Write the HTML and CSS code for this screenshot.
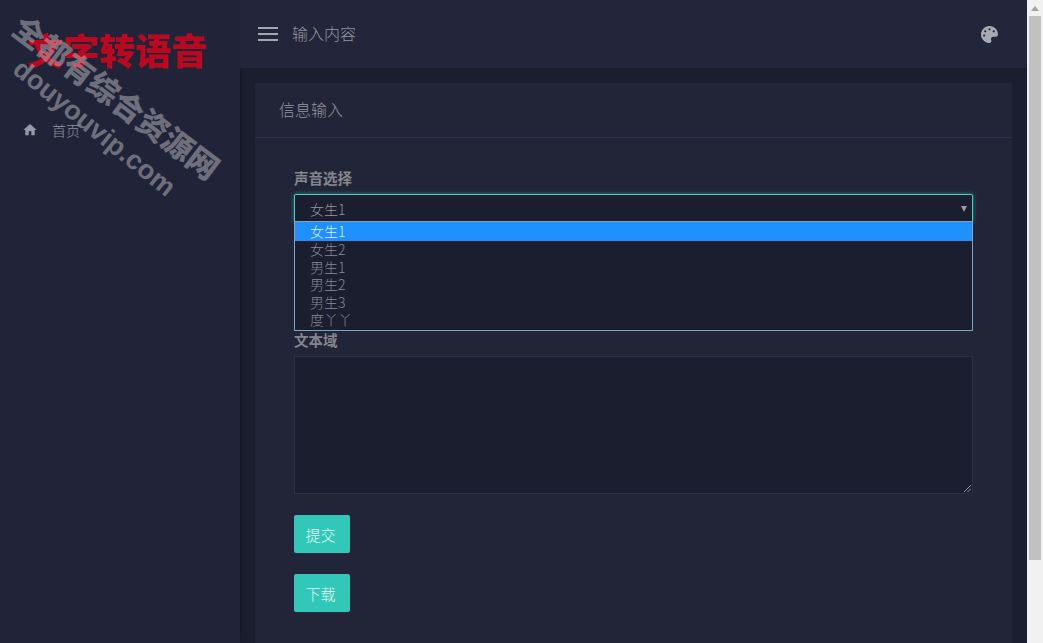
FILE: index.html
```html
<!DOCTYPE html>
<html lang="zh-CN">
<head>
    <meta charset="UTF-8">
    <title>文字转语音</title>
    <link rel="stylesheet" href="styles.css">
</head>
<body>

<div class="app">

    <!-- Sidebar -->
    <aside class="sidebar">
        <div class="logo">文字转语音</div>
        <a class="nav-item">
            <svg class="nav-icon" viewBox="0 0 24 24"><path d="M10 20v-6h4v6h5v-8h3L12 3 2 12h3v8z"/></svg>
            <span>首页</span>
        </a>
    </aside>

    <div class="main">

        <!-- Header -->
        <header class="topbar">
            <div class="burger"><i></i><i></i><i></i></div>
            <div class="topbar-title">输入内容</div>
            <svg class="palette" viewBox="0 0 512 512"><path d="M204.3 5C104.9 24.4 24.8 104.3 5.2 203.4c-37 187 131.7 326.4 258.8 306.7 41.2-6.4 61.4-54.6 42.5-91.7-23.1-45.4 9.9-98.4 60.9-98.4h79.7c35.8 0 64.8-29.6 64.9-65.3C511.5 97.1 368.1-26.9 204.3 5zM96 320c-17.7 0-32-14.3-32-32s14.3-32 32-32 32 14.3 32 32-14.3 32-32 32zm32-128c-17.7 0-32-14.3-32-32s14.3-32 32-32 32 14.3 32 32-14.3 32-32 32zm128-64c-17.7 0-32-14.3-32-32s14.3-32 32-32 32 14.3 32 32-14.3 32-32 32zm128 64c-17.7 0-32-14.3-32-32s14.3-32 32-32 32 14.3 32 32-14.3 32-32 32z"/></svg>
        </header>

        <!-- Card -->
        <div class="content">
            <div class="card">
                <div class="card-head">信息输入</div>
                <div class="card-body">
                    <div class="field-label">声音选择</div>
                    <div class="select-wrap">
                        <div class="select">
                            <span>女生1</span>
                            <span class="caret"></span>
                        </div>
                        <ul class="options">
                            <li class="active">女生1</li>
                            <li>女生2</li>
                            <li>男生1</li>
                            <li>男生2</li>
                            <li>男生3</li>
                            <li>度丫丫</li>
                        </ul>
                    </div>
                    <div class="field-label area-label">文本域</div>
                    <div class="textarea">
                        <svg class="grip" viewBox="0 0 8 8"><path d="M0 8L8 0M4 8L8 4"/></svg>
                    </div>
                    <button class="btn">提交</button>
                    <button class="btn">下载</button>
                </div>
            </div>
        </div>
    </div>

    <!-- Scrollbar -->
    <div class="scrollbar">
        <div class="arrow"></div>
        <div class="thumb"></div>
    </div>
</div>

<!-- Watermark -->
<div class="watermark">
    <div class="wm-cn">全都有综合资源网</div>
    <div class="wm-en">douyouvip.com</div>
</div>

</body>
</html>
```

FILE: styles.css
```css
* {
    box-sizing: border-box;
}
html, body {
    margin: 0;
    height: 100%;
    overflow: hidden;
}
body {
    font-family: "Noto Sans CJK SC", "Liberation Sans", sans-serif;
    background: #1b1e2f;
    color: #93949f;
}
.app {
    display: flex;
    height: 643px;
}

/* sidebar */
.sidebar {
    width: 240px;
    flex: none;
    background: #212439;
    box-shadow: 1px 0 4px rgba(0,0,0,0.25);
}
.logo {
    height: 100px;
    padding: 24px 0 0 27px;
    font-size: 36px;
    line-height: 50px;
    font-weight: 900;
    color: #b9081f;
    white-space: nowrap;
}
.nav-item {
    display: flex;
    align-items: center;
    height: 20px;
    margin-top: 20px;
    padding-left: 22px;
    font-size: 14px;
    font-weight: 300;
    color: #93949f;
}
.nav-icon {
    width: 16px;
    height: 16px;
    fill: #9a9ba5;
    margin-right: 14px;
}

/* header */
.main {
    flex: 1;
    min-width: 0;
    display: flex;
    flex-direction: column;
}
.topbar {
    height: 68px;
    flex: none;
    display: flex;
    align-items: center;
    padding: 0 29px 0 18px;
    background: #23263a;
}
.burger {
    width: 20px;
    display: flex;
    flex-direction: column;
    gap: 4px;
    margin-right: 14px;
}
.burger i {
    display: block;
    height: 2px;
    background: #a3a4ad;
}
.topbar-title {
    flex: 1;
    padding-bottom: 2px;
    font-size: 16px;
    font-weight: 300;
    color: #93949f;
}
.palette {
    width: 17px;
    height: 17px;
    fill: #a8a9b1;
}

/* card */
.content {
    flex: 1;
    padding: 15px 15px 0;
}
.card {
    height: 100%;
    background: #222538;
}
.card-head {
    height: 55px;
    padding: 0 24px;
    line-height: 52px;
    font-size: 16px;
    font-weight: 300;
    color: #93949f;
    border-bottom: 1px solid #2d3044;
}
.card-body {
    padding: 28px 39px 0;
}
.field-label {
    font-size: 14.5px;
    line-height: 24px;
    font-weight: 700;
    color: #85868f;
    margin-bottom: 4px;
}
.area-label {
    line-height: 18px;
    margin-bottom: 7px;
}

/* select */
.select-wrap {
    position: relative;
    height: 137px;
}
.select {
    display: flex;
    align-items: center;
    justify-content: space-between;
    height: 28px;
    padding: 2px 5px 0 15px;
    font-size: 14px;
    font-weight: 300;
    color: #93949f;
    background: #1b1e2f;
    border: 1px solid #46cfc2;
    border-radius: 2px 2px 0 0;
    box-shadow: 0 0 4px rgba(52,200,185,0.6);
}
.caret {
    width: 0;
    height: 0;
    border-left: 3px solid transparent;
    border-right: 3px solid transparent;
    border-top: 6px solid #9a9ba5;
}
.options {
    position: absolute;
    left: 0;
    right: 0;
    top: 27px;
    height: 110px;
    margin: 0;
    padding: 0;
    list-style: none;
    overflow: hidden;
    font-size: 14px;
    line-height: 16px;
    font-weight: 300;
    color: #878894;
    background: #1b1e2f;
    border: 1px solid #7aa6c4;
}
.options li {
    height: 17.6px;
    padding-left: 15px;
}
.options li.active {
    height: 19px;
    line-height: 19px;
    color: #d8f2ff;
    background: #1e90ff;
}

/* textarea */
.textarea {
    position: relative;
    height: 138px;
    background: #1b1e2f;
    border: 1px solid #2d3044;
}
.grip {
    position: absolute;
    right: 1px;
    bottom: 1px;
    width: 7px;
    height: 7px;
    stroke: #a8a9b1;
    stroke-width: 1;
    fill: none;
}

/* buttons */
.btn {
    display: block;
    width: 56px;
    height: 38px;
    margin-top: 21px;
    padding: 0 3px 0 0;
    font: 300 15px "Noto Sans CJK SC", sans-serif;
    color: #e4f7f5;
    background: #32c8b9;
    border: none;
    border-radius: 2px;
}

/* scrollbar */
.scrollbar {
    width: 16px;
    flex: none;
    padding: 0 2px;
    background: #f1f1f1;
}
.arrow {
    width: 0;
    height: 0;
    margin: 6px auto 5px;
    border-left: 4px solid transparent;
    border-right: 4px solid transparent;
    border-bottom: 5px solid #a3a3a3;
}
.thumb {
    height: 544px;
    background: #c1c1c1;
}

/* watermark */
.watermark {
    position: absolute;
    left: 0;
    top: 0;
    width: 0;
    height: 0;
    color: rgba(178,178,184,0.55);
    white-space: nowrap;
    pointer-events: none;
}
.wm-cn, .wm-en {
    position: absolute;
    transform-origin: left center;
}
.wm-cn {
    left: 18px;
    top: 2px;
    font-size: 31px;
    line-height: 40px;
    font-weight: 900;
    transform: rotate(37deg);
}
.wm-en {
    left: 17px;
    top: 50px;
    font-family: "Liberation Sans", sans-serif;
    font-size: 27px;
    line-height: 30px;
    font-weight: 700;
    transform: rotate(39deg);
}
```
